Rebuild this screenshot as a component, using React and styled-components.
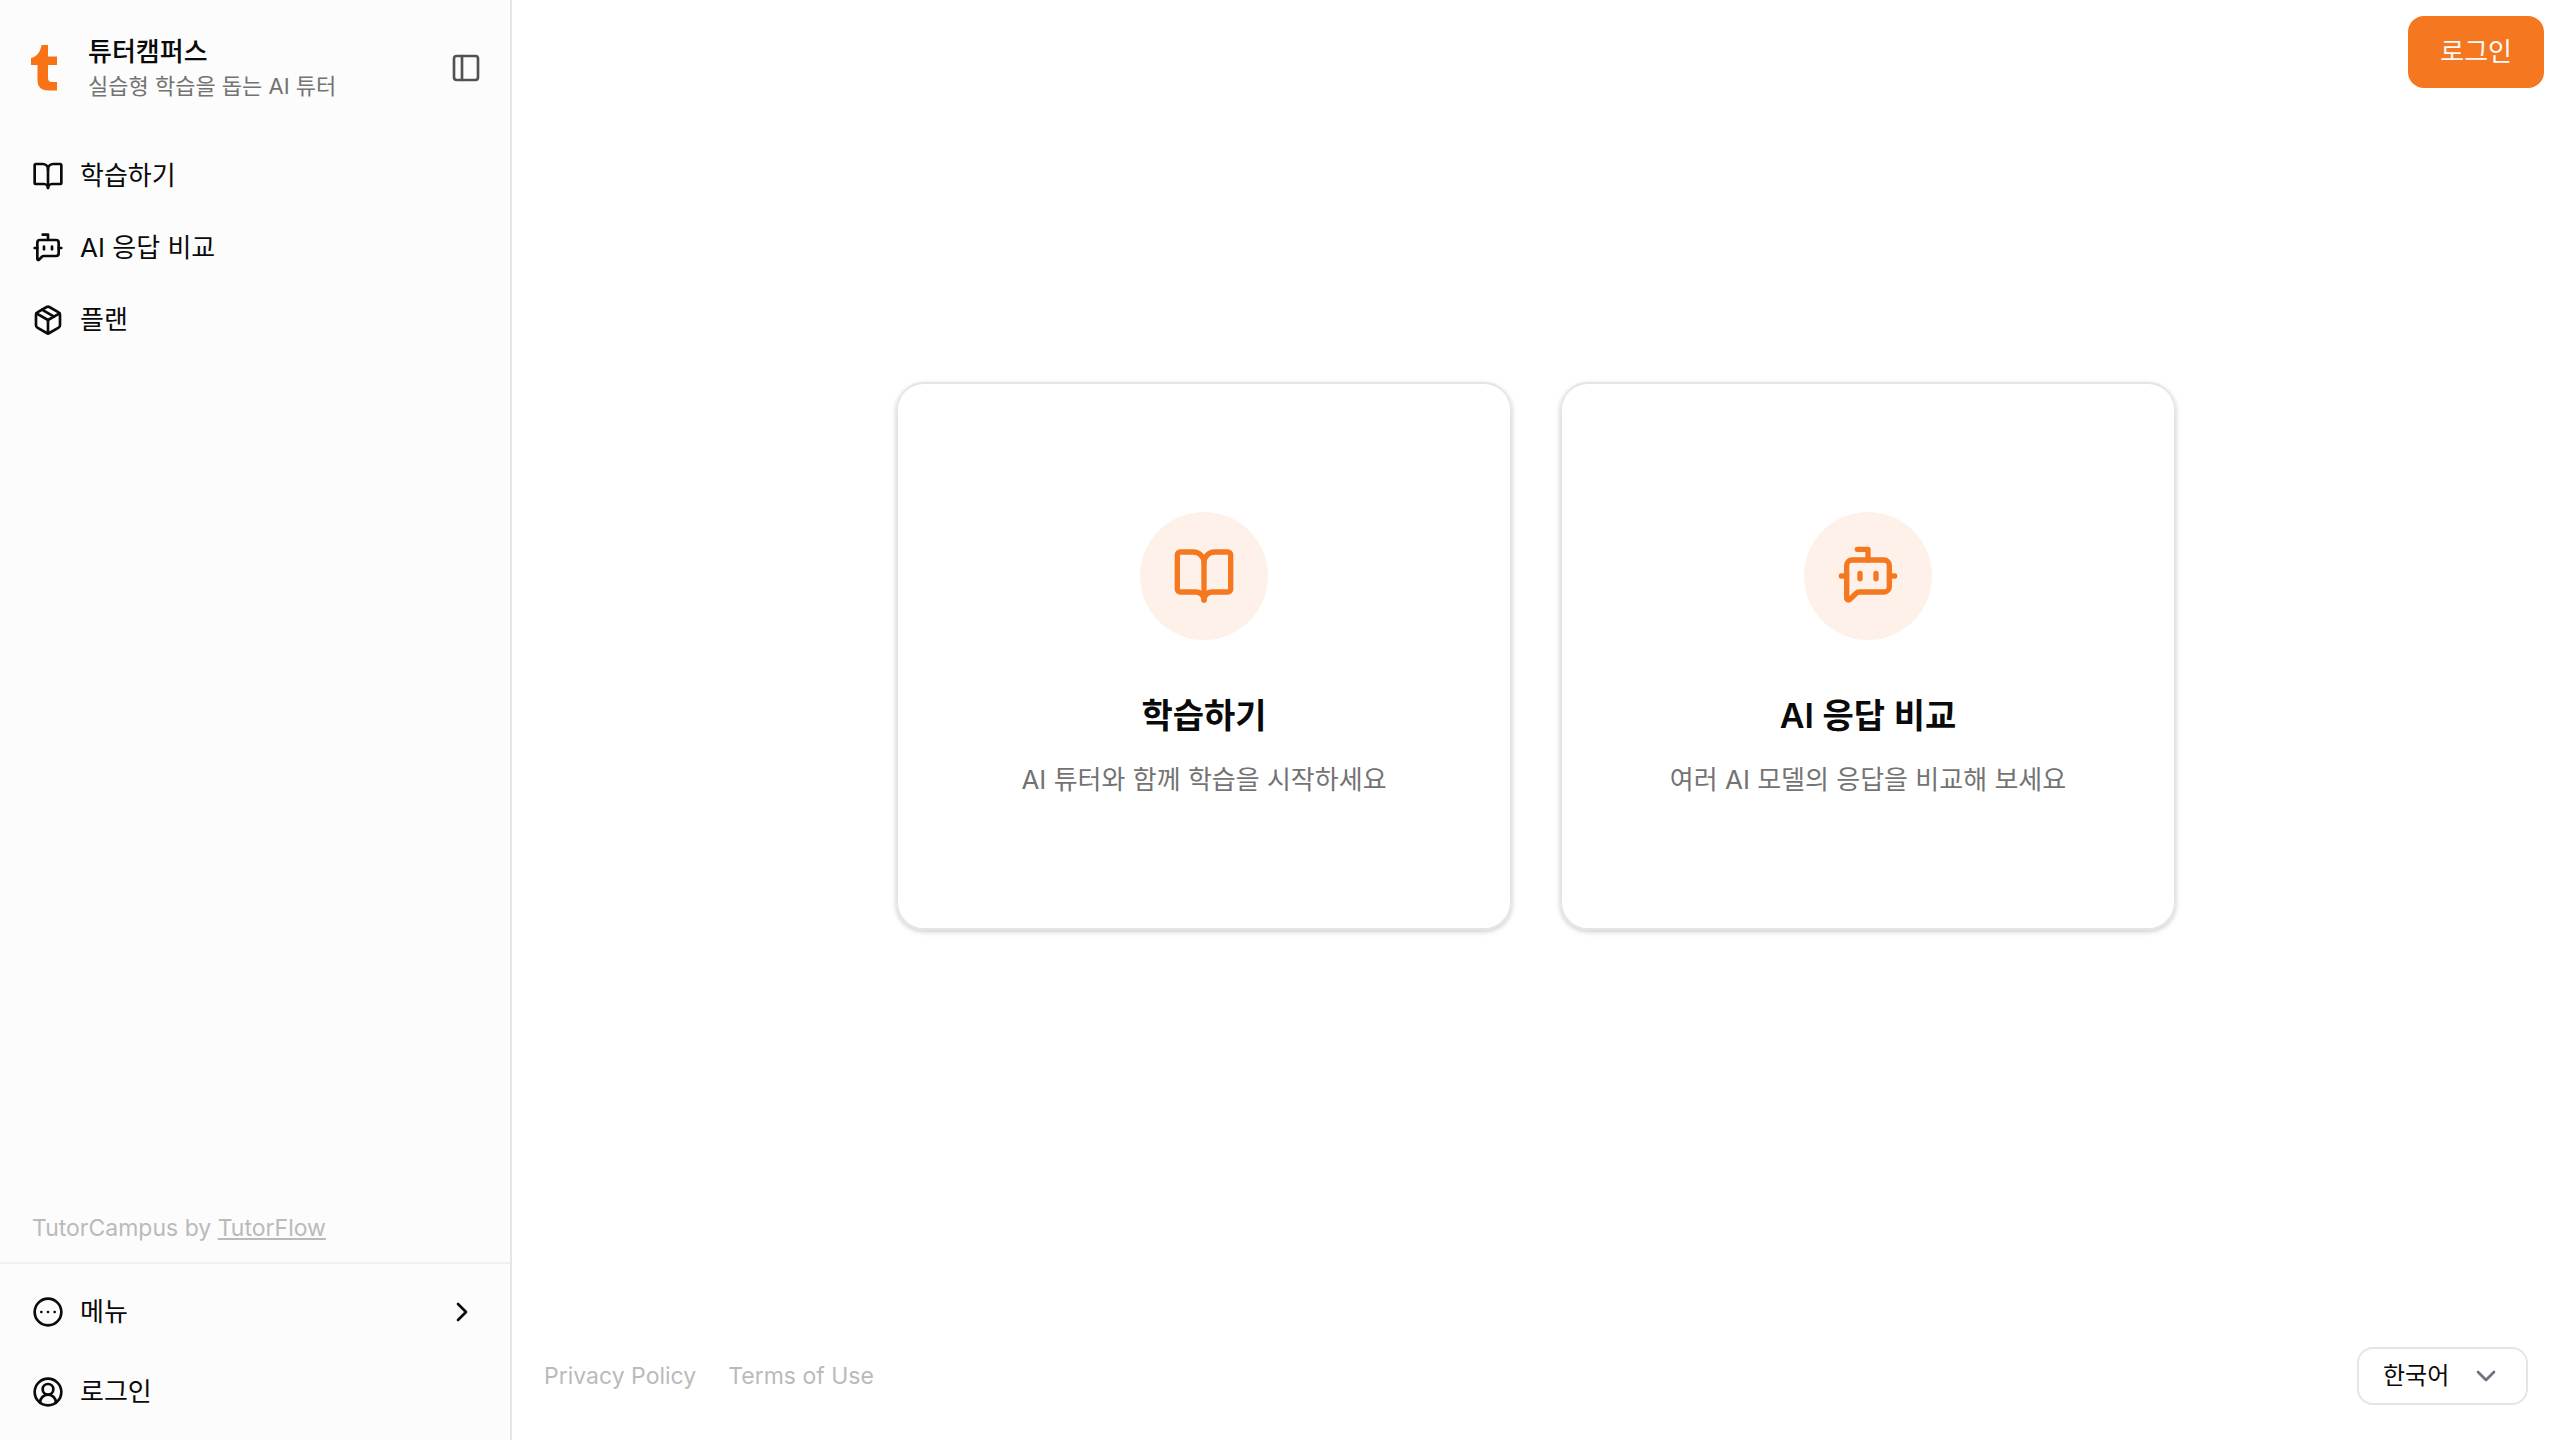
import styled, { createGlobalStyle } from "styled-components";
import {
  BookOpen,
  BotMessageSquare,
  ChevronDown,
  ChevronRight,
  CircleEllipsis,
  CircleUserRound,
  Package,
  PanelLeft,
} from "lucide-react";

const navItems = [
  { label: "학습하기", icon: BookOpen },
  { label: "AI 응답 비교", icon: BotMessageSquare },
  { label: "플랜", icon: Package },
];

const cards = [
  {
    title: "학습하기",
    description: "AI 튜터와 함께 학습을 시작하세요",
    icon: BookOpen,
  },
  {
    title: "AI 응답 비교",
    description: "여러 AI 모델의 응답을 비교해 보세요",
    icon: BotMessageSquare,
  },
];

const Logo = () => (
  <svg width="28" height="46" viewBox="0 0 28 46" fill="#f97316" aria-hidden="true">
    <path d="M10.5 0H17V11.5H26V20H17V33C17 35.8 18.3 37 21 37H26V45.5H17.5C10 45.5 6.5 41.5 6.5 35V20H0V13C5.5 12 9.5 7 10.5 0Z" />
  </svg>
);

const App = () => {
  return (
    <>
      <GlobalStyle />
      <Layout>
        <Sidebar>
          <Brand>
            <Logo />
            <BrandText>
              <BrandName>튜터캠퍼스</BrandName>
              <BrandCaption>실습형 학습을 돕는 AI 튜터</BrandCaption>
            </BrandText>
            <IconButton type="button" aria-label="사이드바">
              <PanelLeft size={32} />
            </IconButton>
          </Brand>
          <Nav>
            {navItems.map(({ label, icon: Icon }) => (
              <NavLink key={label} href="#">
                <Icon size={32} />
                {label}
              </NavLink>
            ))}
          </Nav>
          <Credit>
            TutorCampus by <a href="#">TutorFlow</a>
          </Credit>
          <AccountMenu>
            <MenuButton type="button">
              <CircleEllipsis size={32} />
              <span>메뉴</span>
              <ChevronRight size={32} />
            </MenuButton>
            <MenuButton type="button">
              <CircleUserRound size={32} />
              <span>로그인</span>
            </MenuButton>
          </AccountMenu>
        </Sidebar>
        <Main>
          <TopBar>
            <LoginButton type="button">로그인</LoginButton>
          </TopBar>
          <CardArea>
            <CardGrid>
              {cards.map(({ title, description, icon: Icon }) => (
                <Card key={title} href="#">
                  <IconCircle>
                    <Icon size={64} />
                  </IconCircle>
                  <CardTitle>{title}</CardTitle>
                  <CardDescription>{description}</CardDescription>
                </Card>
              ))}
            </CardGrid>
          </CardArea>
          <Footer>
            <FooterLinks>
              <a href="#">Privacy Policy</a>
              <a href="#">Terms of Use</a>
            </FooterLinks>
            <SelectWrapper>
              <LanguageSelect aria-label="언어" defaultValue="ko">
                <option value="ko">한국어</option>
              </LanguageSelect>
              <ChevronDown size={32} />
            </SelectWrapper>
          </Footer>
        </Main>
      </Layout>
    </>
  );
};

export default App;

const GlobalStyle = createGlobalStyle`
  * {
    box-sizing: border-box;
  }
  body {
    margin: 0;
    background-color: #ffffff;
    color: #0a0a0a;
    font-family: Inter, "Noto Sans CJK KR", sans-serif;
    font-size: 26px;
    line-height: 40px;
  }
  a {
    color: inherit;
    text-decoration: none;
  }
  button,
  select {
    font: inherit;
    color: inherit;
    background: none;
    border: none;
    cursor: pointer;
  }
  svg {
    flex-shrink: 0;
  }
`;

const Layout = styled.div`
  display: flex;
  min-height: 100vh;
`;
const Sidebar = styled.aside`
  display: flex;
  flex-direction: column;
  width: 512px;
  flex-shrink: 0;
  background-color: #fcfcfc;
  border-right: 2px solid #e5e5e5;
`;
const Brand = styled.header`
  display: flex;
  align-items: center;
  min-height: 136px;
  padding: 0 28px 0 31px;
`;
const BrandText = styled.div`
  flex: 1;
  margin-left: 29px;
`;
const BrandName = styled.p`
  margin: 0;
  font-weight: 500;
  line-height: 36px;
`;
const BrandCaption = styled.p`
  margin: 0;
  font-size: 22px;
  line-height: 32px;
  color: #737373;
`;
const IconButton = styled.button`
  display: flex;
  padding: 0;
  color: #525252;
`;
const Nav = styled.nav`
  display: flex;
  flex-direction: column;
  padding: 4px 16px;
`;
const NavLink = styled.a`
  display: flex;
  align-items: center;
  gap: 16px;
  padding: 16px;
`;
const Credit = styled.p`
  margin: auto 0 0;
  padding: 16px 32px;
  font-size: 23px;
  line-height: 36px;
  color: #bababa;

  a {
    text-decoration: underline;
    text-decoration-thickness: 2px;
    text-underline-offset: 2px;
  }
`;
const AccountMenu = styled.div`
  display: flex;
  flex-direction: column;
  gap: 8px;
  padding: 12px 16px;
  border-top: 2px solid #f0f0f0;
`;
const MenuButton = styled.button`
  display: flex;
  align-items: center;
  gap: 16px;
  padding: 16px;
  text-align: left;

  span {
    flex: 1;
  }
`;
const Main = styled.main`
  display: grid;
  grid-template-rows: 1fr auto;
  flex: 1;
`;
const TopBar = styled.header`
  grid-area: 1 / 1;
  justify-self: end;
  align-self: start;
  z-index: 1;
  padding: 16px;
`;
const LoginButton = styled.button`
  padding: 16px 32px;
  border-radius: 16px;
  background-color: #f57720;
  color: #fafafa;
`;
const CardArea = styled.section`
  grid-area: 1 / 1;
  display: flex;
  align-items: center;
  justify-content: center;
`;
const CardGrid = styled.div`
  display: grid;
  grid-template-columns: 1fr 1fr;
  gap: 48px;
  width: 100%;
  max-width: 1280px;
`;
const Card = styled.a`
  display: flex;
  flex-direction: column;
  align-items: center;
  padding: 128px 64px;
  border: 2px solid #e5e5e5;
  border-radius: 28px;
  box-shadow: 0 2px 6px rgba(0, 0, 0, 0.1), 0 2px 4px rgba(0, 0, 0, 0.1);
`;
const IconCircle = styled.div`
  display: flex;
  align-items: center;
  justify-content: center;
  width: 128px;
  height: 128px;
  margin-bottom: 48px;
  border-radius: 50%;
  background-color: #fef1e9;
  color: #f57720;
`;
const CardTitle = styled.h2`
  margin: 0 0 16px;
  font-weight: 600;
  font-size: 34px;
  line-height: 56px;
`;
const CardDescription = styled.p`
  margin: 0;
  color: #737373;
`;
const Footer = styled.footer`
  display: flex;
  align-items: center;
  justify-content: space-between;
  padding: 35px 32px;
`;
const FooterLinks = styled.div`
  display: flex;
  gap: 32px;
  font-size: 23px;
  color: #bababa;
`;
const SelectWrapper = styled.div`
  display: grid;
  align-items: center;
  color: #6b7280;

  svg {
    grid-area: 1 / 1;
    justify-self: end;
    margin-right: 26px;
    pointer-events: none;
  }
`;
const LanguageSelect = styled.select`
  grid-area: 1 / 1;
  appearance: none;
  height: 58px;
  padding: 0 76px 0 24px;
  border: 2px solid #e5e5e5;
  border-radius: 16px;
  font-size: 24px;
  color: #0a0a0a;
`;
